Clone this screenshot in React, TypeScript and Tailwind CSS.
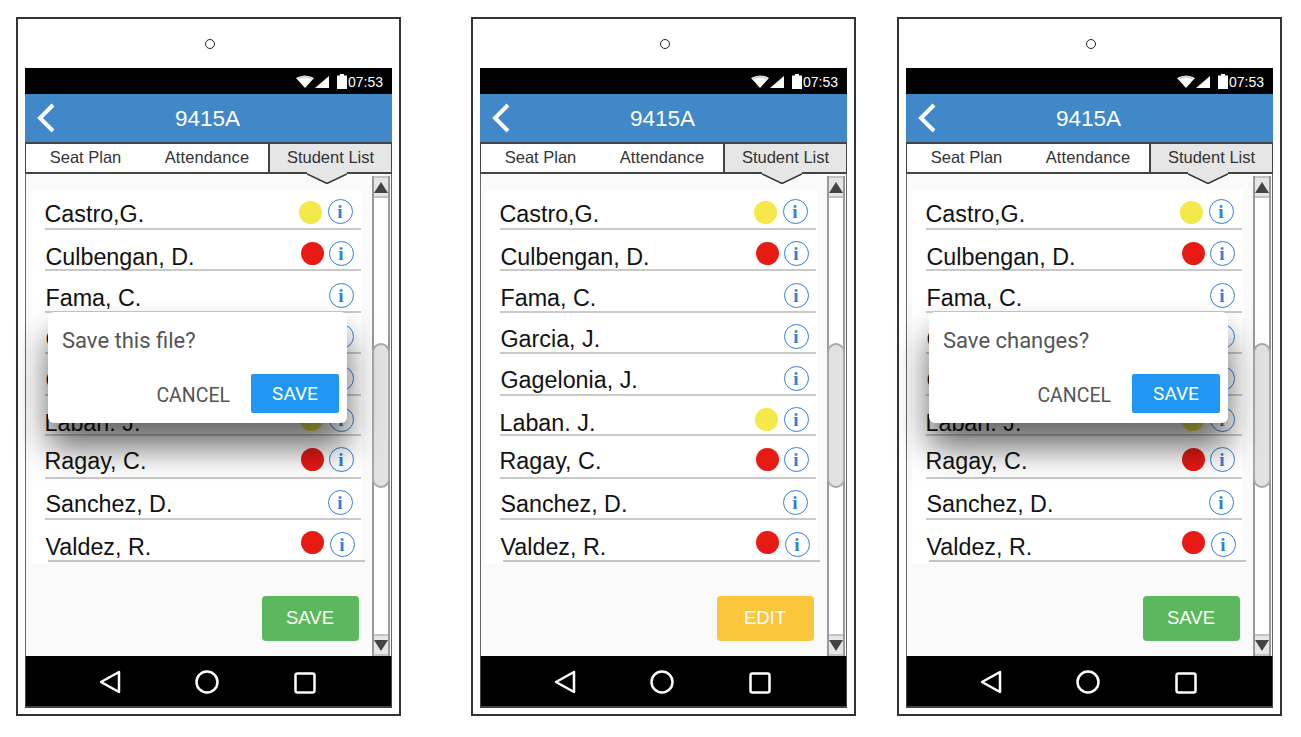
const rows = [
  { name: "Castro,G.", row: "h-[40px]", nameC: "mt-[11px]", dot: "bg-[#f4e84a]", dotC: "mt-[11px] mr-[6px]", infoC: "mt-[9px] mr-[8px]" },
  { name: "Culbengan, D.", row: "h-[41px]", nameC: "mt-[14px] ml-[1px]", dot: "bg-[#e81a14]", dotC: "mt-[12px] mr-[5px]", infoC: "mt-[11px] mr-[7px]" },
  { name: "Fama, C.", row: "h-[42px]", nameC: "mt-[14px] ml-[1px]", dot: "", dotC: "", infoC: "mt-[12px] mr-[7px]" },
  { name: "Garcia, J.", row: "h-[41px]", nameC: "mt-[13px] ml-[1px]", dot: "", dotC: "", infoC: "mt-[11px] mr-[7px]" },
  { name: "Gagelonia, J.", row: "h-[42px]", nameC: "mt-[13px] ml-[1px]", dot: "", dotC: "", infoC: "mt-[12px] mr-[7px]" },
  { name: "Laban. J.", row: "h-[40px]", nameC: "mt-[14px]", dot: "bg-[#f4e84a]", dotC: "mt-[12px] mr-[6px]", infoC: "mt-[11px] mr-[7px]" },
  { name: "Ragay, C.", row: "h-[43px]", nameC: "mt-[12px]", dot: "bg-[#e81a14]", dotC: "mt-[12px] mr-[5px]", infoC: "mt-[11px] mr-[7px]" },
  { name: "Sanchez, D.", row: "h-[41px]", nameC: "mt-[12px] ml-[1px]", dot: "", dotC: "", infoC: "mt-[11px] mr-[8px]" },
];

function Info({ className }: { className: string }) {
  return (
    <span
      className={`flex h-[25px] w-[25px] shrink-0 items-center justify-center rounded-full border-[1.5px] border-[#2f80d8] bg-white font-['Liberation_Serif',serif] text-[19px] font-bold leading-none text-[#2f80d8] ${className}`}
    >
      i
    </span>
  );
}

function Row({ r }: { r: (typeof rows)[number] }) {
  return (
    <div className={`ml-[14px] flex w-[316px] items-start border-b-2 border-[#c9c9c9] ${r.row}`}>
      <span className={`text-[23.3px] leading-[26px] text-[#111] ${r.nameC}`}>{r.name}</span>
      <span className="ml-auto" />
      {r.dot && <span className={`h-[23px] w-[23px] shrink-0 rounded-full ${r.dot} ${r.dotC}`} />}
      <Info className={r.infoC} />
    </div>
  );
}

function Scrollbar() {
  return (
    <div className="mt-[2px] flex h-[480px] w-[18px] shrink-0 flex-col border-x-2 border-[#9a9a9a] bg-white">
      <div className="flex h-[22px] items-center justify-center border-y-2 border-[#c4c4c4] bg-[#e6e6e6]">
        <svg width="14" height="11" viewBox="0 0 14 11"><polygon points="7,0 14,11 0,11" fill="#444" /></svg>
      </div>
      <div className="h-[145px]" />
      <div className="-mx-[2px] h-[145px] rounded-[9px] border-2 border-[#a8a8a8] bg-[#e2e2e2]" />
      <div className="flex-1" />
      <div className="flex h-[22px] items-center justify-center border-y-2 border-[#c4c4c4] bg-[#e6e6e6]">
        <svg width="14" height="11" viewBox="0 0 14 11"><polygon points="0,0 14,0 7,11" fill="#444" /></svg>
      </div>
    </div>
  );
}

function Dialog({ title }: { title: string }) {
  return (
    <div className="absolute left-[22px] top-[138px] flex h-[111px] w-[299px] flex-col rounded-[6px] bg-white pl-[14px] pr-[8px] pt-[15px] font-['Roboto',sans-serif] shadow-[0_24px_34px_rgba(0,0,0,0.6)]">
      <div className="text-[22px] leading-[28px] text-[#555]">{title}</div>
      <div className="mt-[19px] flex items-center justify-end">
        <span className="mr-[21px] pt-[4px] text-[19.5px] text-[#555]">CANCEL</span>
        <span className="flex h-[39px] w-[88px] items-center justify-center rounded-[2px] bg-[#2196f3] pt-[2px] text-[19px] text-white">SAVE</span>
      </div>
    </div>
  );
}

function Phone({ dialog, action, actionBg, extra }: { dialog?: string; action: string; actionBg: string; extra: string }) {
  return (
    <div className={`h-[699px] w-[385px] shrink-0 border-2 border-[#333] bg-white ${extra}`}>
      <div className="flex h-[49px] justify-center pt-[20px]">
        <span className="ml-[2px] h-[10px] w-[10px] rounded-full border-[1.5px] border-[#222]" />
      </div>
      <div className="ml-[7px] flex h-[640px] w-[367px] flex-col font-['Liberation_Sans',sans-serif]">
        <div className="flex h-[26px] items-center justify-end bg-black pr-[9px] pt-[1px] text-white">
          <svg width="18" height="13" viewBox="0 0 18 13" className="mr-[1px]">
            <path d="M0 3 Q9 -2 18 3 L9 13 Z" fill="#fff" />
            <path d="M2.5 3.6 Q9 0 15.5 3.6" stroke="#aaa" strokeWidth="1" fill="none" />
          </svg>
          <svg width="14" height="13" viewBox="0 0 14 13" className="mr-[8px]"><polygon points="14,1 14,13 0,13" fill="#fff" /></svg>
          <svg width="10" height="15" viewBox="0 0 10 15" className="mr-[1px]"><path d="M3 0 H7 V1.5 H10 V15 H0 V1.5 H3 Z" fill="#fff" /></svg>
          <span className="text-[14px] leading-none">07:53</span>
        </div>
        <div className="relative flex h-[48px] items-center justify-center bg-[#4088c8] pt-[1px] text-[22.5px] text-white">
          <svg width="20" height="30" viewBox="0 0 20 30" className="absolute left-[11px] top-[9px]">
            <path d="M17 2 L4 15 L17 28" stroke="#fff" strokeWidth="4" fill="none" />
          </svg>
          <span className="-ml-[2px]">9415A</span>
        </div>
        <div className="relative z-10 flex h-[32px] border-x-[1.5px] border-y-2 border-[#444] bg-white pb-[1px] text-[16.5px] text-[#333]">
          <div className="flex w-[119px] items-center justify-center">Seat Plan</div>
          <div className="flex w-[123px] items-center justify-center pl-[1px] tracking-[0.1px]">Attendance</div>
          <div className="-mb-[1px] flex flex-1 items-center justify-center border-l-2 border-[#444] bg-[#e6e6e6] pb-[1px]">Student List</div>
          <svg width="40" height="12" viewBox="0 0 40 12" className="absolute left-[281px] top-[28px]">
            <polygon points="0,0 40,0 40,2 20,11.5 0,2" fill="#e6e6e6" />
            <polyline points="0,2 20,11.5 40,2" fill="none" stroke="#333" strokeWidth="1.5" />
          </svg>
        </div>
        <div className="relative flex h-[482px] border-x-[1.5px] border-[#666] bg-[#fafafa]">
          <div className="flex w-[346px] flex-col pl-[4.5px] pt-[16px]">
            <div className="h-[374px] w-[331px] bg-white">
              {rows.map((r) => (
                <Row key={r.name} r={r} />
              ))}
              <div className="relative ml-[14px] flex h-[42px] w-[317px] items-start">
                <span className="ml-[1px] mt-[14px] text-[23.3px] leading-[26px] text-[#111]">Valdez, R.</span>
                <span className="ml-auto mr-[6px] mt-[11px] h-[23px] w-[23px] shrink-0 rounded-full bg-[#e81a14]" />
                <Info className="mr-[7px] mt-[12px]" />
                <div className="absolute bottom-0 left-[3px] h-[2px] w-[317px] bg-[#c4c4c8]" />
              </div>
            </div>
            <div className={`ml-[231px] mt-[32px] flex h-[45px] w-[97px] items-center justify-center rounded-[4px] pb-[2px] text-[18.5px] text-white ${actionBg}`}>
              {action}
            </div>
          </div>
          <Scrollbar />
          {dialog && <Dialog title={dialog} />}
        </div>
        <div className="flex h-[52px] items-center border-x-[1.5px] border-b-2 border-[#444] bg-black pt-[2px]">
          <svg width="24" height="26" viewBox="0 0 24 26" className="ml-[72px]">
            <path d="M21 3 L3 13 L21 23 Z" stroke="#fff" strokeWidth="2.5" fill="none" strokeLinejoin="round" />
          </svg>
          <svg width="26" height="26" viewBox="0 0 26 26" className="ml-[72px]">
            <circle cx="13" cy="13" r="10.5" stroke="#fff" strokeWidth="2.5" fill="none" />
          </svg>
          <svg width="24" height="24" viewBox="0 0 24 24" className="ml-[73px] mt-[2px]">
            <rect x="2.5" y="2.5" width="19" height="19" rx="2" stroke="#fff" strokeWidth="2.5" fill="none" />
          </svg>
        </div>
      </div>
    </div>
  );
}

export default function App() {
  return (
    <div className="flex h-[737px] w-[1301px] overflow-hidden bg-white pl-[16px] pt-[17px]">
      <Phone dialog="Save this file?" action="SAVE" actionBg="bg-[#5cb85c]" extra="" />
      <Phone action="EDIT" actionBg="bg-[#fbc53c]" extra="ml-[70px]" />
      <Phone dialog="Save changes?" action="SAVE" actionBg="bg-[#5cb85c]" extra="ml-[41px]" />
    </div>
  );
}
